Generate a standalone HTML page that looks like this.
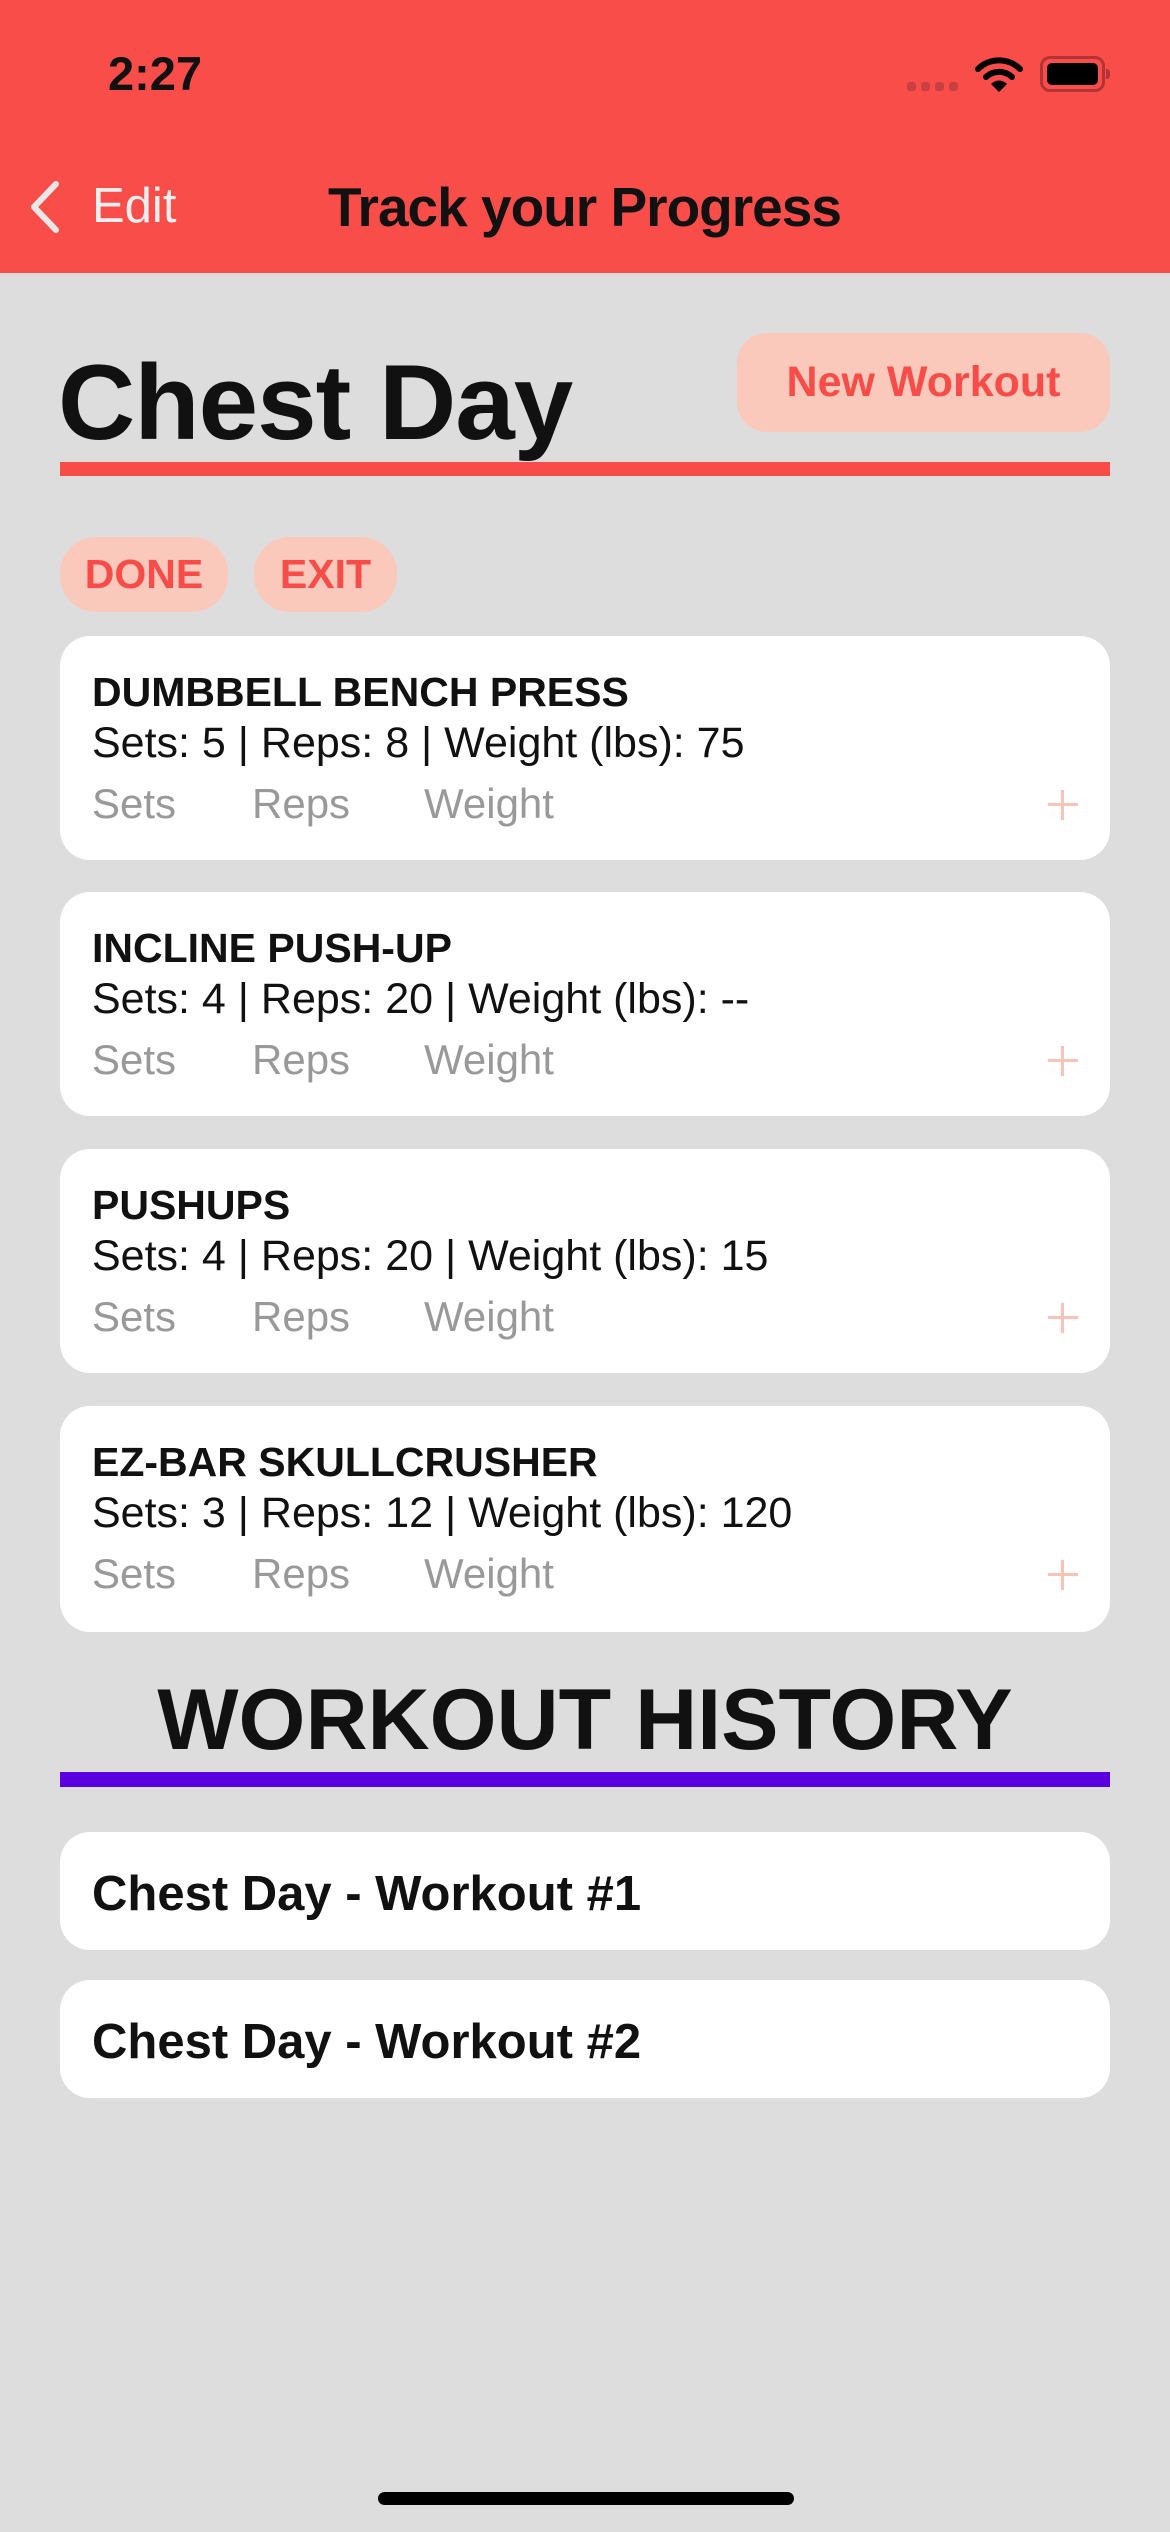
<!DOCTYPE html>
<html><head><meta charset="utf-8"><style>
*{margin:0;padding:0;box-sizing:border-box}
body{width:1170px;height:2532px;background:#dddddd;position:relative;overflow:hidden;font-family:"Liberation Sans",sans-serif;color:#111}
.a{position:absolute;white-space:nowrap}
.card{position:absolute;left:60px;width:1050px;background:#fff;border-radius:30px}
.ct{position:absolute;left:32px;font-weight:bold;font-size:41px;top:33px}
.cs{position:absolute;left:32px;font-size:43px;top:83px}
.cg{position:absolute;font-size:42px;color:#999;top:144px}
.plus{position:absolute;left:988px;top:154px;width:30px;height:30px}
.plus:before{content:"";position:absolute;left:13px;top:0;width:3px;height:30px;background:#fbc3b8}
.plus:after{content:"";position:absolute;left:0;top:13px;width:30px;height:3px;background:#fbc3b8}
.pill{position:absolute;background:#fbc8bc;color:#f74c48;font-weight:bold;text-align:center}
.hc{position:absolute;left:60px;width:1050px;height:118px;background:#fff;border-radius:30px}
.hc span{position:absolute;left:32px;top:34px;font-size:49px;font-weight:bold}
</style></head><body>
<div class="a" style="left:0;top:0;width:1170px;height:273px;background:#f94d4a"></div>
<div class="a" style="left:108px;top:46px;font-size:47px;font-weight:bold">2:27</div>
<div class="a" style="left:907px;top:82px;width:9px;height:9px;border-radius:3px;background:#c84040"></div>
<div class="a" style="left:921px;top:82px;width:9px;height:9px;border-radius:3px;background:#c84040"></div>
<div class="a" style="left:935px;top:82px;width:9px;height:9px;border-radius:3px;background:#c84040"></div>
<div class="a" style="left:949px;top:82px;width:9px;height:9px;border-radius:3px;background:#c84040"></div>
<svg class="a" style="left:975px;top:55px" width="48" height="37" viewBox="0 0 48 37">
<path d="M3 14 A30 30 0 0 1 45 14" stroke="#000" stroke-width="6" fill="none" stroke-linecap="round"/>
<path d="M11 22 A19 19 0 0 1 37 22" stroke="#000" stroke-width="6" fill="none" stroke-linecap="round"/>
<path d="M16 29 L24 37 L32 29 A11 11 0 0 0 16 29Z" fill="#000"/>
</svg>
<div class="a" style="left:1040px;top:56px;width:65px;height:36px;border:3px solid #b23434;border-radius:10px"></div>
<div class="a" style="left:1047px;top:63px;width:51px;height:22px;background:#000;border-radius:5px"></div>
<div class="a" style="left:1106px;top:69px;width:4px;height:10px;background:#b23434;border-radius:0 3px 3px 0"></div>
<svg class="a" style="left:26px;top:180px" width="36" height="54" viewBox="0 0 36 54"><path d="M30 4 L8 27 L30 50" stroke="#e8e8e8" stroke-width="6" fill="none" stroke-linecap="round" stroke-linejoin="round"/></svg>
<div class="a" style="left:92px;top:178px;font-size:49px;color:#eeeeee">Edit</div>
<div class="a" style="left:328px;top:175px;font-size:55px;font-weight:bold;letter-spacing:-1px">Track your Progress</div>
<div class="a" style="left:58px;top:340px;font-size:107px;font-weight:bold;letter-spacing:-1px">Chest Day</div>
<div class="a" style="left:60px;top:462px;width:1050px;height:14px;background:#f74c48"></div>
<div class="pill" style="left:737px;top:333px;width:373px;height:99px;border-radius:30px;font-size:43px;line-height:99px">New Workout</div>
<div class="pill" style="left:60px;top:537px;width:168px;height:75px;border-radius:36px;font-size:41px;line-height:75px">DONE</div>
<div class="pill" style="left:254px;top:537px;width:143px;height:75px;border-radius:36px;font-size:41px;line-height:75px">EXIT</div>

<div class="card" style="top:636px;height:224px"><div class="ct">DUMBBELL BENCH PRESS</div><div class="cs">Sets: 5 | Reps: 8 | Weight (lbs): 75</div><div class="cg" style="left:32px">Sets</div><div class="cg" style="left:192px">Reps</div><div class="cg" style="left:364px">Weight</div><div class="plus"></div></div>
<div class="card" style="top:892px;height:224px"><div class="ct">INCLINE PUSH-UP</div><div class="cs">Sets: 4 | Reps: 20 | Weight (lbs): --</div><div class="cg" style="left:32px">Sets</div><div class="cg" style="left:192px">Reps</div><div class="cg" style="left:364px">Weight</div><div class="plus"></div></div>
<div class="card" style="top:1149px;height:224px"><div class="ct">PUSHUPS</div><div class="cs">Sets: 4 | Reps: 20 | Weight (lbs): 15</div><div class="cg" style="left:32px">Sets</div><div class="cg" style="left:192px">Reps</div><div class="cg" style="left:364px">Weight</div><div class="plus"></div></div>
<div class="card" style="top:1406px;height:226px"><div class="ct">EZ-BAR SKULLCRUSHER</div><div class="cs">Sets: 3 | Reps: 12 | Weight (lbs): 120</div><div class="cg" style="left:32px">Sets</div><div class="cg" style="left:192px">Reps</div><div class="cg" style="left:364px">Weight</div><div class="plus"></div></div>

<div class="a" style="left:0;width:1170px;text-align:center;top:1671px;font-size:86px;font-weight:bold">WORKOUT HISTORY</div>
<div class="a" style="left:60px;top:1772px;width:1050px;height:15px;background:#5a00e0"></div>
<div class="hc" style="top:1832px"><span>Chest Day - Workout #1</span></div>
<div class="hc" style="top:1980px"><span>Chest Day - Workout #2</span></div>
<div class="a" style="left:378px;top:2492px;width:416px;height:13px;border-radius:7px;background:#000"></div>
</body></html>
